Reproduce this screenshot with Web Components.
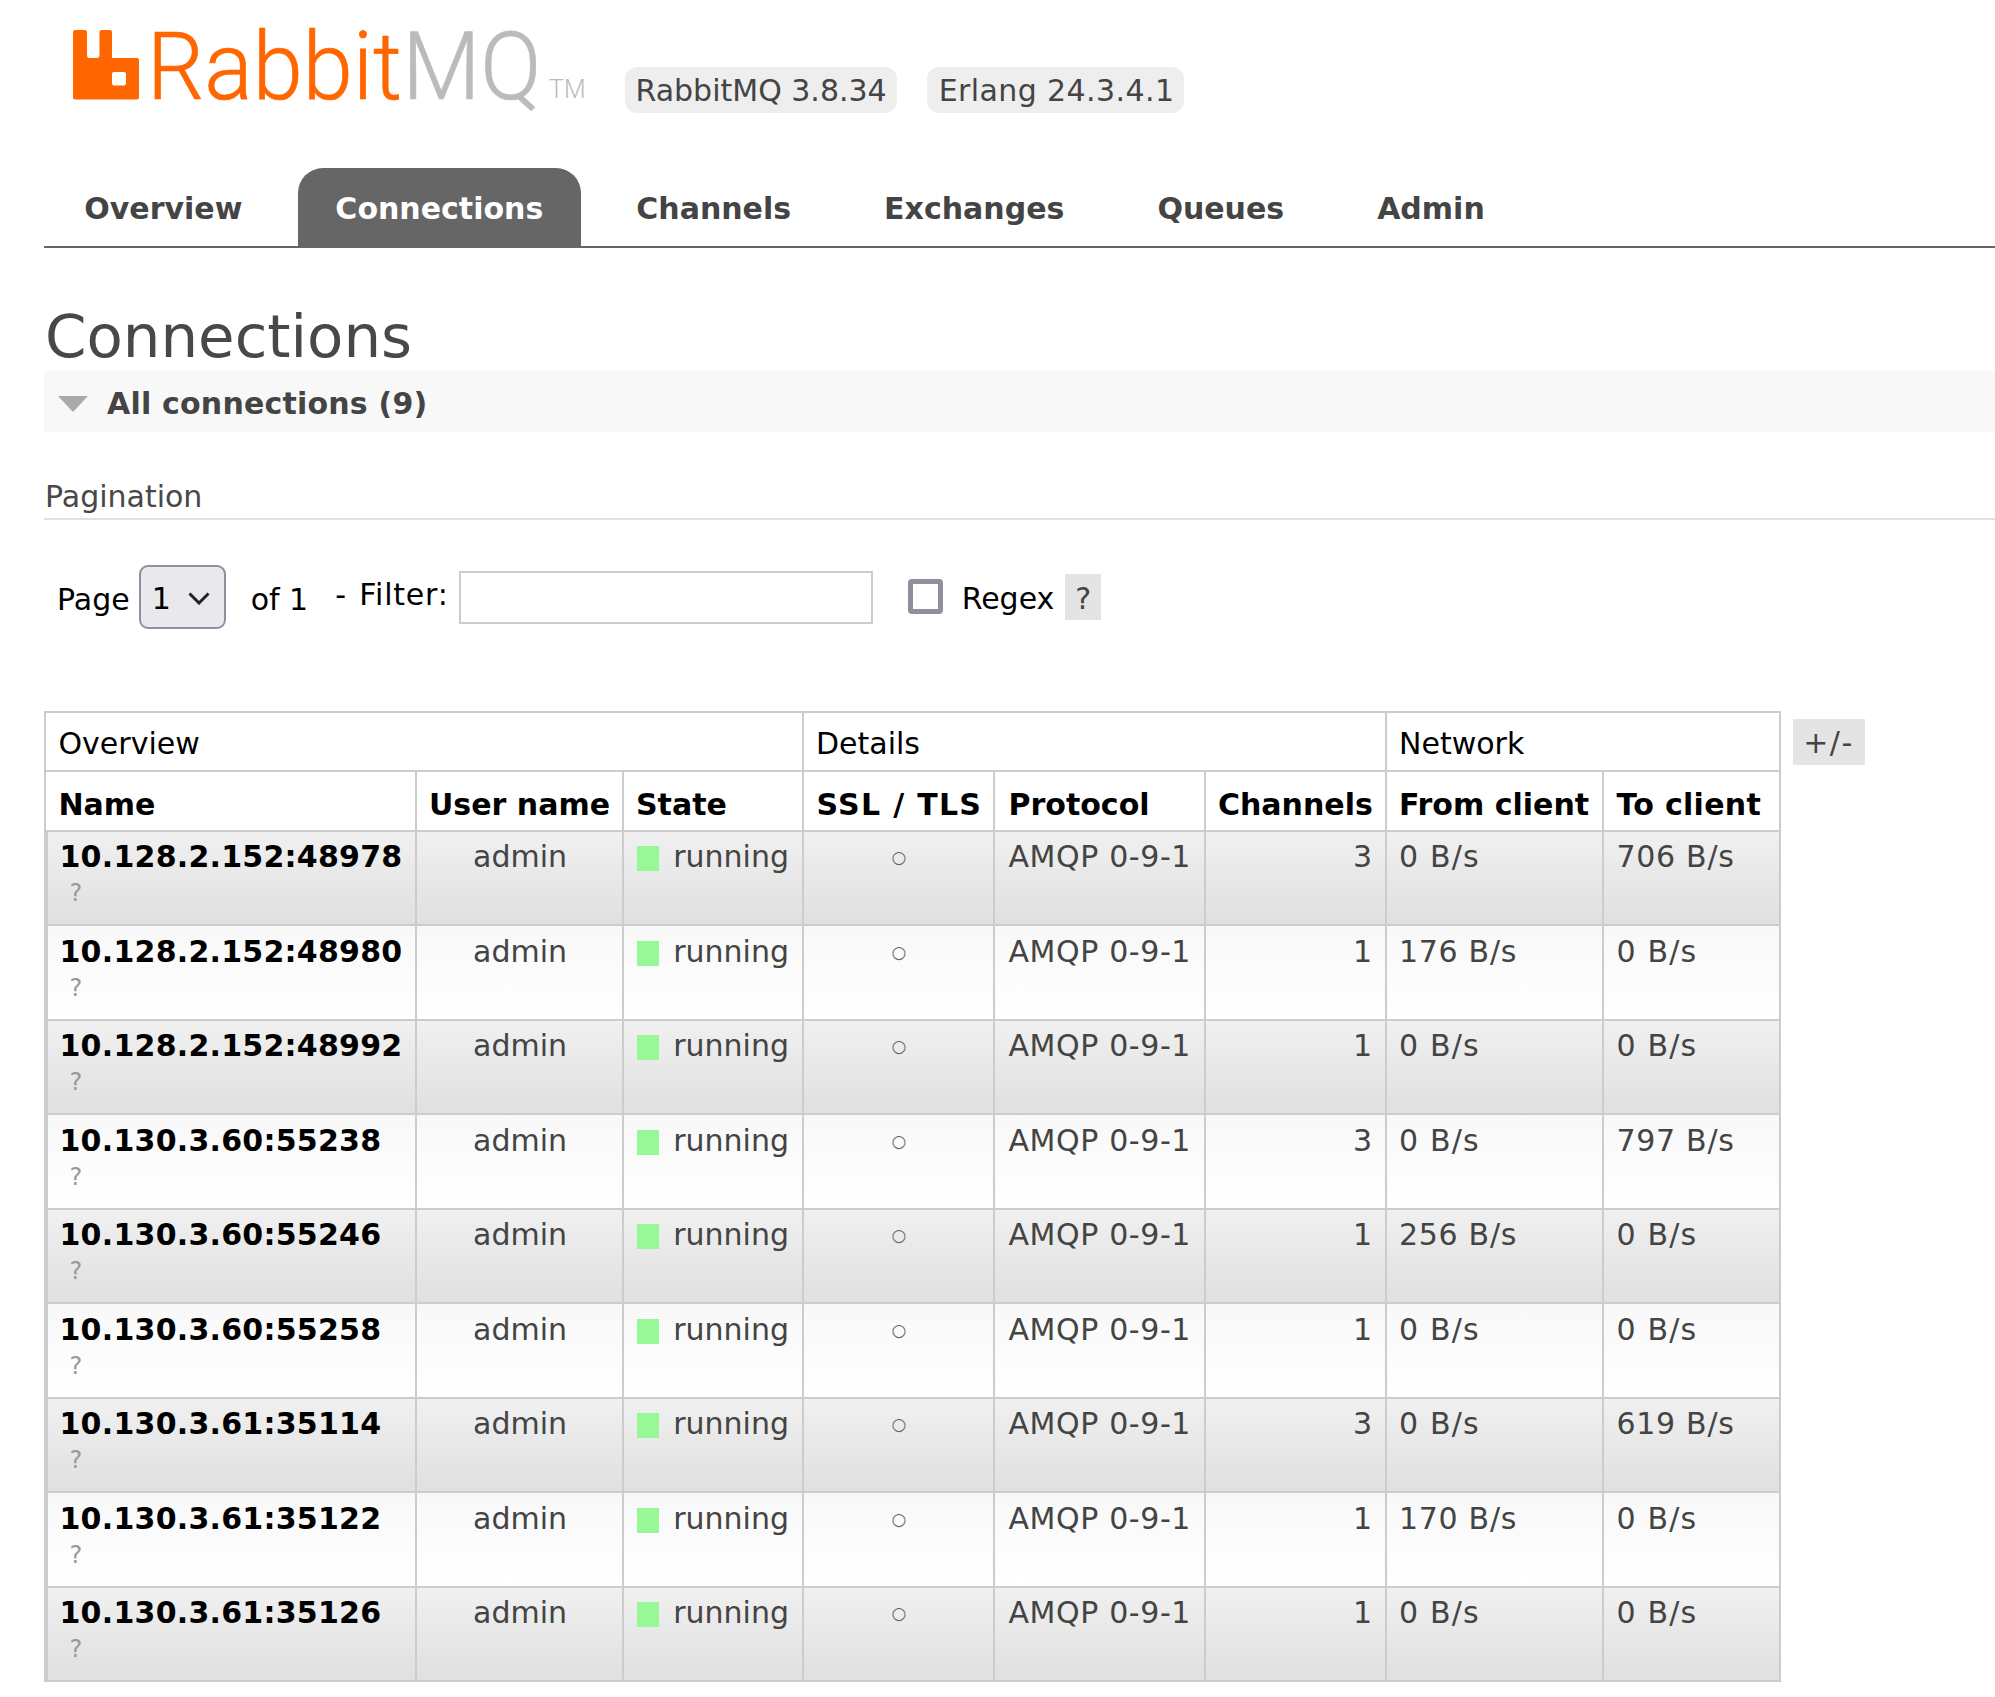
<!DOCTYPE html>
<html><head><meta charset="utf-8"><style>
html,body{margin:0;padding:0;background:#fff;}
body{font-family:"DejaVu Sans",sans-serif;font-size:30px;color:#444;overflow-x:hidden;}
</style></head><body>
<rmq-app>
<rmq-header></rmq-header>
<rmq-nav active="Connections"><a>Overview</a><a>Connections</a><a>Channels</a><a>Exchanges</a><a>Queues</a><a>Admin</a></rmq-nav>
<rmq-title>Connections</rmq-title>
<rmq-section>All connections (9)</rmq-section>
<rmq-pagination></rmq-pagination>
<conn-table>
<conn-row name="10.128.2.152:48978" ch="3" from="0 B/s" to="706 B/s"></conn-row>
<conn-row name="10.128.2.152:48980" ch="1" from="176 B/s" to="0 B/s"></conn-row>
<conn-row name="10.128.2.152:48992" ch="1" from="0 B/s" to="0 B/s"></conn-row>
<conn-row name="10.130.3.60:55238" ch="3" from="0 B/s" to="797 B/s"></conn-row>
<conn-row name="10.130.3.60:55246" ch="1" from="256 B/s" to="0 B/s"></conn-row>
<conn-row name="10.130.3.60:55258" ch="1" from="0 B/s" to="0 B/s"></conn-row>
<conn-row name="10.130.3.61:35114" ch="3" from="0 B/s" to="619 B/s"></conn-row>
<conn-row name="10.130.3.61:35122" ch="1" from="170 B/s" to="0 B/s"></conn-row>
<conn-row name="10.130.3.61:35126" ch="1" from="0 B/s" to="0 B/s"></conn-row>
</conn-table>
</rmq-app>
<script>
function def(name,html,extra){
  customElements.define(name,class extends HTMLElement{
    constructor(){super();this.attachShadow({mode:'open'}).innerHTML=html;}
    connectedCallback(){if(extra)extra(this);}
  });
}
def('rmq-app',`<style>:host{display:block;box-sizing:border-box;height:1697px;overflow:hidden}</style><slot></slot>`);
def('rmq-header',`<style>
:host{display:flex;align-items:flex-start;height:168px;box-sizing:border-box;padding-left:73px;}
svg{display:block;margin-top:29.5px;flex:none}
.word{margin-left:8px;margin-top:3px;font-family:"Roboto",sans-serif;font-weight:300;-webkit-text-stroke:.7px currentColor;font-size:95px;line-height:128px;white-space:nowrap;color:#f60;width:402px;flex:none;transform:scaleX(.95);transform-origin:0 50%}
.word span{color:#bbb}
.tm{font-family:"Roboto",sans-serif;font-weight:300;font-size:25px;line-height:30px;color:#bbb;margin-top:75px;width:36px;flex:none;white-space:nowrap}
.b{background:#eee;border-radius:12px;height:46px;line-height:48px;padding:0 10.5px;margin-top:67px;color:#444;font-size:30px;white-space:nowrap;flex:none}
.b1{margin-left:40px}.b2{margin-left:30px;letter-spacing:.4px;padding:0 9.5px 0 11.5px}
</style>
<svg width="66" height="70" viewBox="0 0 66 70"><path fill="#f60" fill-rule="evenodd" d="M2 0H12Q14 0 14 2V25Q14 28 16 28H24Q26.500 28 26.500 25V2Q26.500 0 28.500 0H37Q39 0 39 2V28H64Q66 28 66 30V67.500Q66 69.500 64 69.500H2Q0 69.500 0 67.500V2Q0 0 2 0ZM41 42Q39 42 39 44V53Q39 55.500 41 55.500H51Q53 55.500 53 53V44Q53 42 51 42Z"/></svg>
<div class="word">Rabbit<span>MQ</span></div><div class="tm">TM</div>
<div class="b b1">RabbitMQ 3.8.34</div><div class="b b2">Erlang 24.3.4.1</div>`);
def('rmq-nav',`<style>
:host{display:flex;margin-left:44px;height:80px;box-sizing:border-box;border-bottom:2.500px solid #666;gap:17.500px;padding-left:2.500px;font-weight:bold;font-size:30px}
::slotted(a){display:block;padding:0 37.750px;line-height:82px;height:78px;color:#444;border-radius:25px 25px 0 0}
::slotted(a.on){background:#666;color:#fff}
</style><slot></slot>`,el=>{[...el.children].forEach(a=>{if(a.textContent===el.getAttribute('active'))a.className='on'})});
def('rmq-title',`<style>:host{display:block;margin-left:45px;font-size:59.400px;line-height:72px;height:72px;margin-top:53px;margin-bottom:-2px;color:#484848;white-space:nowrap}</style><slot></slot>`);
def('rmq-section',`<style>
:host{display:flex;align-items:center;box-sizing:border-box;padding-top:4px;margin-left:44px;height:61px;background:#f8f8f8;font-weight:bold;font-size:30px;color:#444;letter-spacing:.2px}
i{display:block;width:0;height:0;border-left:15px solid transparent;border-right:15px solid transparent;border-top:16px solid #aaa;margin:0 19px 0 14px}
</style><i></i><slot></slot>`);
def('rmq-pagination',`<style>
:host{display:block;margin-left:44px}
h3{margin:0;font-weight:normal;font-size:30px;line-height:36px;padding:47px 0 3px 1px;border-bottom:2.500px solid #e0e0e0;color:#484848}
.r{display:flex;align-items:flex-start;color:#000;height:190.500px;padding-left:13px;white-space:nowrap}
.t{margin-top:61.500px;line-height:36px;color:#000}
.f{margin-top:57px;line-height:36px;word-spacing:2px;letter-spacing:.8px}
.sel{box-sizing:border-box;margin:45px 0 0 9px;width:87px;height:64px;background:#e9e9ed;border:2.500px solid #8f8f9d;border-radius:9px;display:flex;align-items:center;padding:2px 0 0 11px}
.sel svg{margin-left:16px}
.inp{box-sizing:border-box;margin:51px 0 0 10px;width:414px;height:53px;border:2.500px solid #ccc;background:#fff}
.cb{box-sizing:border-box;margin:58.500px 0 0 35px;width:35px;height:35px;border:5px solid #8f8f9d;border-radius:4px;background:#fff}
.rg{margin-top:61px;margin-left:19px;line-height:36px}
.q{margin:53.500px 0 0 11px;width:36px;height:46px;background:#e4e4e4;text-align:center;line-height:50px;color:#444}
</style><h3>Pagination</h3>
<div class="r"><div class="t">Page</div><div class="sel">1<svg width="24" height="14" viewBox="0 0 24 14"><path d="M2.500 2.500L12 12L21.500 2.500" fill="none" stroke="#222" stroke-width="3"/></svg></div><div class="t" style="margin-left:25px">of 1</div><div class="f" style="margin-left:27px">- Filter:</div><div class="inp"></div><div class="cb"></div><div class="rg">Regex</div><div class="q">?</div></div>`);
const COLS='368.500px 207px 180px 191px 211px 181px 217.500px 178px';
def('conn-table',`<style>
:host{display:block;margin-left:44px;width:1736.500px;position:relative;color:#000;border-top:2.500px solid #ccc;box-sizing:border-box;border-right:2px solid #ccc}
.g{display:grid;grid-template-columns:755.500px 583px 394.500px;height:59.500px;box-sizing:border-box;border-bottom:2.500px solid #ccc;border-left:2px solid #ccc}
.g div,.h div{box-sizing:border-box;padding-left:12.500px;border-left:2px solid #ccc;line-height:36px;white-space:nowrap}
.g div:first-child,.h div:first-child{border-left:0}
.g div{padding-top:13.500px}
.h{display:grid;grid-template-columns:${COLS};height:59.500px;box-sizing:border-box;border-bottom:2.500px solid #ccc;font-weight:bold;border-left:2px solid #ccc}
.h div{padding-top:14.500px}
.h .ssl{letter-spacing:1.300px;padding-left:13px}
.h .p{padding-left:14px}
.h .tc{letter-spacing:.3px}
.pm{position:absolute;left:1748.500px;top:6px;width:72px;height:46px;background:#e4e4e4;text-align:center;line-height:47px;color:#444;letter-spacing:1.500px}
</style>
<div class="g"><div>Overview</div><div>Details</div><div>Network</div></div>
<div class="h"><div>Name</div><div>User name</div><div>State</div><div class="ssl">SSL / TLS</div><div class="p">Protocol</div><div>Channels</div><div>From client</div><div class="tc">To client</div></div>
<slot></slot><div class="pm">+/-</div>`);
let idx=0;
customElements.define('conn-row',class extends HTMLElement{
  connectedCallback(){
    const alt=idx++%2===0;
    const a=n=>this.getAttribute(n);
    const ls=v=>v==='0 B/s'?'1.200px':'.7px';
    this.attachShadow({mode:'open'}).innerHTML=`<style>
:host{display:grid;grid-template-columns:${COLS};height:94.560px;box-sizing:border-box;border-bottom:2.500px solid #ccc;border-left:2px solid #ccc;background:${alt?'linear-gradient(#f0f0f0,#e0e0e0)':'linear-gradient(#f8f8f8,#fff)'};color:#444}
div.c{box-sizing:border-box;padding:7.500px 12.500px 0;border-left:2px solid #ccc;line-height:36px;white-space:nowrap}
div.c:first-child{border-left:0}
b{color:#000;display:block;letter-spacing:.25px;margin-left:-1px}
small{display:block;font-size:24px;line-height:36px;color:#999;padding-left:9px}
div.ctr{text-align:center;padding-left:14px;padding-right:12px}.rt{text-align:right}
div.st{display:flex;align-items:flex-start;padding-left:13px}
.st i{display:block;width:25px;height:25px;background:#98f898;margin:7px 14px 0 0}
.ssl{font-size:17px;color:#666;position:relative;top:-4px}
.ws{letter-spacing:.7px}
div.pr{padding-left:14px;letter-spacing:.6px}
</style>
<div class="c"><b>${a('name')}</b><small>?</small></div>
<div class="c ctr">admin</div>
<div class="c st"><i></i>running</div>
<div class="c ctr"><span class="ssl">○</span></div>
<div class="c ws pr">AMQP 0-9-1</div>
<div class="c rt">${a('ch')}</div>
<div class="c" style="letter-spacing:${ls(a('from'))}">${a('from')}</div>
<div class="c" style="letter-spacing:${ls(a('to'))}">${a('to')}</div>`;
  }
});
</script></body></html>
